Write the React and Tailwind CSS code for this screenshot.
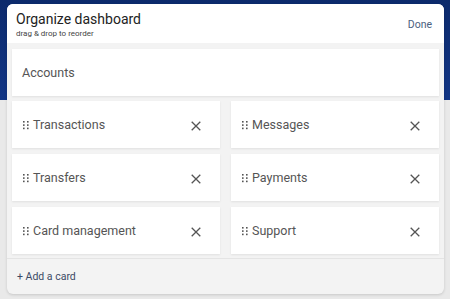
import React from 'react';

const cards = ['Transactions', 'Messages', 'Transfers', 'Payments', 'Card management', 'Support'];

const Grip = () => (
  <svg width="6" height="9" viewBox="0 0 6 9" className="shrink-0 text-[#555]">
    {[0, 1].map((c) =>
      [0, 1, 2].map((r) => <rect key={`${c}-${r}`} x={c * 4} y={r * 3.3} width="1.6" height="1.6" fill="currentColor" />)
    )}
  </svg>
);

const Close = () => (
  <svg width="10" height="10" viewBox="0 0 10 10" className="shrink-0 text-[#555]">
    <path d="M0.7 0.7L9.3 9.3M9.3 0.7L0.7 9.3" stroke="currentColor" strokeWidth="1.3" fill="none" />
  </svg>
);

const App = () => {
  return (
    <div
      className="w-[450px] h-[299px] pt-[4px] pl-[7px] bg-[linear-gradient(to_bottom,#0c2a6c_0px,#123585_100px,#e9e9e9_100px)]"
      style={{ fontFamily: 'Roboto, "Noto Sans", sans-serif' }}
    >
      <div className="w-[437px] h-[290px] rounded-[6px] bg-[#f3f3f3] overflow-hidden flex flex-col shadow-[0_1px_3px_rgba(0,0,0,0.15)]">
        <div className="h-[39px] bg-white flex justify-between items-start px-[9px] pt-[6px]">
          <div className="flex flex-col">
            <h2 className="text-[14px] leading-[18px] text-[#222]">Organize dashboard</h2>
            <p className="text-[8px] leading-[11px] text-[#444]">drag &amp; drop to reorder</p>
          </div>
          <button className="text-[10.5px] text-[#4a6080] mt-[7px] mr-[3px]">Done</button>
        </div>

        <div className="flex flex-col gap-[5px] px-[5px] pt-[6px]">
          <div className="h-[47px] bg-white shadow-[0_1px_2px_rgba(0,0,0,0.08)] flex items-center px-[10px] pt-[2px]">
            <span className="text-[12.5px] text-[#555]">Accounts</span>
          </div>
          <div className="grid grid-cols-2 gap-x-[11px] gap-y-[6px]">
            {cards.map((c) => (
              <div key={c} className="h-[47px] bg-white shadow-[0_1px_2px_rgba(0,0,0,0.08)] flex items-center pl-[11px] pr-[19px] pt-[2px]">
                <Grip />
                <span className="ml-[4px] text-[12.5px] text-[#555] flex-1">{c}</span>
                <Close />
              </div>
            ))}
          </div>
        </div>

        <div className="mt-auto h-[36px] border-t border-[#e4e4e4] flex items-center px-[10px]">
          <span className="text-[10.5px] text-[#3b4a66]">+ Add a card</span>
        </div>
      </div>
    </div>
  );
};

export default App;
